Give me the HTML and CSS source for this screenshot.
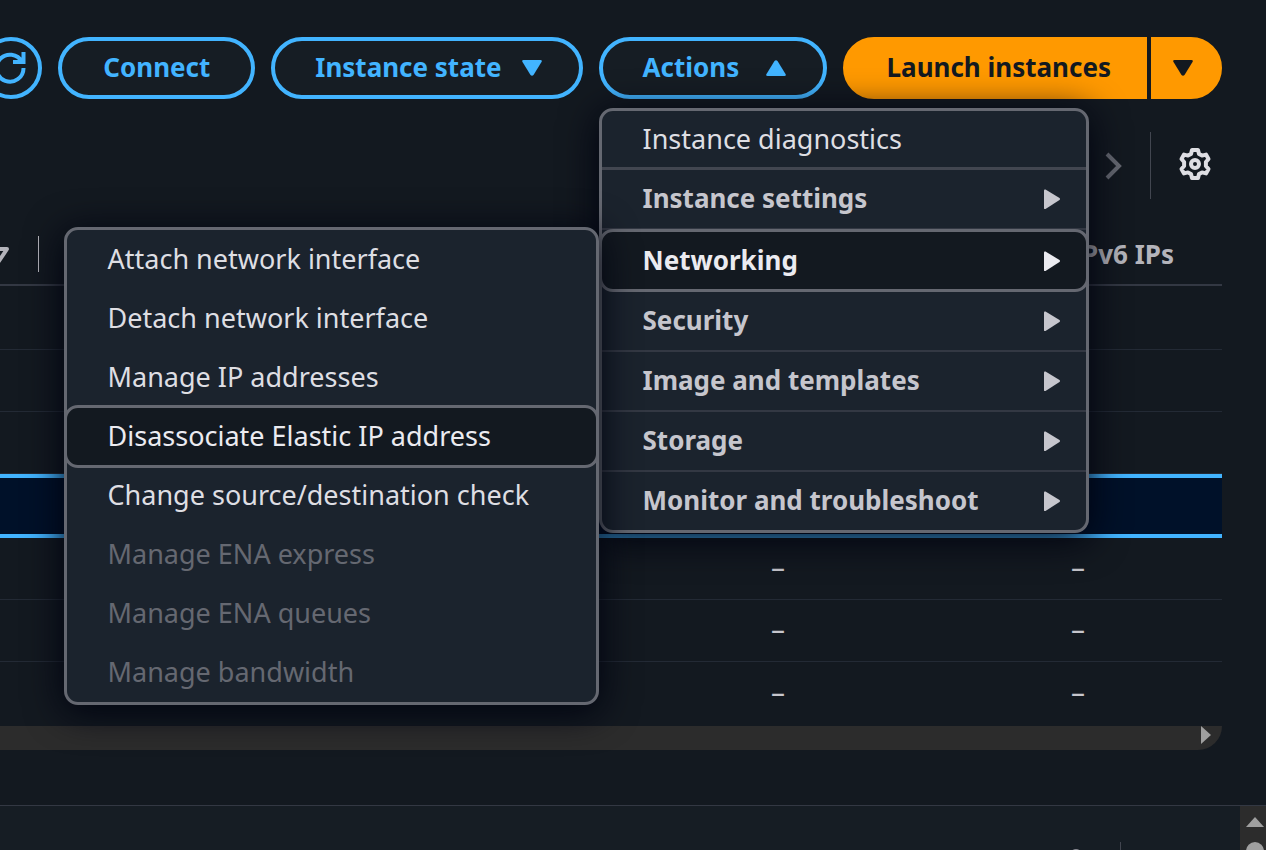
FILE: index.html
```html
<!DOCTYPE html>
<html lang="en">
<head>
    <meta charset="UTF-8">
    <title>Instances</title>
    <link rel="stylesheet" href="styles.css">
</head>
<body>
<svg class="sprite">
    <symbol id="down" viewBox="0 0 20 16"><path d="M1.500 0h17q2 0 1 2L11.500 15q-1.500 1.500-3 0L.5 2Q-.5 0 1.500 0z"/></symbol>
    <symbol id="up" viewBox="0 0 20 16"><path d="M1.500 16h17q2 0 1-2L11.500 1q-1.500-1.500-3 0L.5 14q-1 2 1 2z"/></symbol>
    <symbol id="right" viewBox="0 0 16 20"><path d="M0 1.500q0-1.500 1.500-1L15.500 9q1 1 0 2L1.500 20q-1.500.7-1.500-1z"/></symbol>
</svg>

<div class="toolbar">
    <button class="btn refresh" aria-label="Refresh">
        <svg viewBox="0 0 32 32"><path d="M28.500 0v10H18M27 10A13.500 13.500 0 1 0 28.500 16"/></svg>
    </button>
    <button class="btn">Connect</button>
    <button class="btn with-caret">Instance state <svg class="caret"><use href="#down"/></svg></button>
    <div class="dropdown">
        <button class="btn with-caret">Actions <svg class="caret"><use href="#up"/></svg></button>
        <ul class="menu actions">
            <li><button>Instance diagnostics</button></li>
            <li class="group"><button>Instance settings <svg><use href="#right"/></svg></button></li>
            <li class="group open">
                <button class="active">Networking <svg><use href="#right"/></svg></button>
                <ul class="menu submenu">
                    <li><button>Attach network interface</button></li>
                    <li><button>Detach network interface</button></li>
                    <li><button>Manage IP addresses</button></li>
                    <li><button class="active">Disassociate Elastic IP address</button></li>
                    <li><button>Change source/destination check</button></li>
                    <li><button disabled>Manage ENA express</button></li>
                    <li><button disabled>Manage ENA queues</button></li>
                    <li><button disabled>Manage bandwidth</button></li>
                </ul>
            </li>
            <li class="group"><button>Security <svg><use href="#right"/></svg></button></li>
            <li class="group"><button>Image and templates <svg><use href="#right"/></svg></button></li>
            <li class="group"><button>Storage <svg><use href="#right"/></svg></button></li>
            <li class="group"><button>Monitor and troubleshoot <svg><use href="#right"/></svg></button></li>
        </ul>
    </div>
    <div class="split">
        <button class="btn primary">Launch instances</button>
        <button class="btn primary more" aria-label="More launch options"><svg class="caret"><use href="#down"/></svg></button>
    </div>
</div>

<div class="paging">
    <button class="next" aria-label="Next page"><svg viewBox="0 0 18 28"><path d="M3 2l12 12L3 26"/></svg></button>
    <button class="settings" aria-label="Preferences">
        <svg viewBox="0 0 32 34">
            <path d="M13 3h6l1 4 3 1.600 4-1 2.500 4.400-2.600 3v4l2.600 3-2.500 4.400-4-1-3 1.600-1 4h-6l-1-4-3-1.600-4 1-2.500-4.400 2.600-3v-4l-2.600-3 2.500-4.400 4 1 3-1.600z"/>
            <circle cx="16" cy="17" r="4"/>
        </svg>
    </button>
</div>

<div class="table-wrap">
    <table>
        <colgroup><col class="c-first"><col><col class="c-ip"><col class="c-ipv6"></colgroup>
        <thead>
        <tr>
            <th class="sorted"><span><svg viewBox="0 0 10 14"><path d="M-10 2H7L-1 14z"/></svg></span></th>
            <th></th>
            <th></th>
            <th>IPv6 IPs</th>
        </tr>
        </thead>
        <tbody>
        <tr class="first"><td></td><td></td><td></td><td></td></tr>
        <tr><td></td><td></td><td></td><td></td></tr>
        <tr><td></td><td></td><td></td><td></td></tr>
        <tr class="selected"><td></td><td></td><td></td><td></td></tr>
        <tr><td></td><td></td><td>–</td><td>–</td></tr>
        <tr><td></td><td></td><td>–</td><td>–</td></tr>
        <tr class="last"><td></td><td></td><td>–</td><td>–</td></tr>
        </tbody>
    </table>
    <div class="scroll-x"><svg viewBox="0 0 10 18"><path d="M0 0l10 9-10 9z"/></svg></div>
</div>

<div class="panel">
    <div class="panel-tools">
        <span class="dot"></span>
        <span class="line"></span>
    </div>
    <div class="scroll-y">
        <svg viewBox="0 0 18 10"><path d="M0 10L9 0l9 10z"/></svg>
        <span class="thumb"></span>
    </div>
</div>
</body>
</html>
```

FILE: styles.css
```css
* {
    margin: 0;
    padding: 0;
    box-sizing: border-box;
    list-style: none;
}

body {
    display: flex;
    flex-direction: column;
    min-height: 100vh;
    overflow: hidden;
    background: #131920;
    color: #c6c6cd;
    font-family: "Noto Sans", "Open Sans", sans-serif;
    font-size: 26px;
}

button {
    border: 0;
    background: none;
    color: inherit;
    font: inherit;
    white-space: nowrap;
}

svg {
    display: block;
    flex: none;
    fill: currentColor;
}

.sprite {
    display: none;
}

/* toolbar */
.toolbar {
    display: flex;
    justify-content: flex-end;
    gap: 16px;
    padding: 37px 44px 0 0;
}

.btn {
    display: flex;
    flex: none;
    align-items: center;
    justify-content: center;
    height: 62px;
    padding: 0 41px 2px;
    border: 4px solid #42b4ff;
    border-radius: 31px;
    background: #161d24;
    color: #42b4ff;
    font-weight: 700;
}

.with-caret {
    gap: 20px;
    padding: 0 37px 2px 40px;
}

.caret {
    width: 20px;
    height: 16px;
    margin-top: 2px;
}

.refresh {
    width: 62px;
    padding: 0;
}

.refresh svg {
    width: 32px;
    height: 32px;
    overflow: visible;
    fill: none;
    stroke: currentColor;
    stroke-width: 4;
}

.split {
    display: flex;
    gap: 4px;
}

.primary {
    padding: 0 32px 2px 40px;
    border-color: #ff9900;
    border-radius: 31px 0 0 31px;
    background: #ff9900;
    color: #131920;
}

.more {
    width: 71px;
    padding: 0 8px 2px 0;
    border-radius: 0 31px 31px 0;
}

/* menus */
.dropdown {
    position: relative;
}

.dropdown > .btn {
    justify-content: space-between;
    min-width: 228px;
}

.menu {
    position: absolute;
    z-index: 2;
    border: 3px solid #656871;
    border-radius: 14px;
    background: #1b232d;
    box-shadow: 0 6px 36px 2px #000410;
    color: #dedee3;
    font-size: 27px;
    font-weight: 400;
}

.menu button {
    display: flex;
    align-items: center;
    justify-content: space-between;
    width: 100%;
    height: 59px;
    padding: 0 26px 2px 41px;
}

.menu .active {
    position: relative;
    height: 63px;
    margin: -2px -3px;
    padding: 0 26px 2px 41px;
    border: 3px solid #656871;
    border-radius: 14px;
    background: #131920;
    color: #ebebf0;
}

.menu button:disabled {
    color: #656871;
}

.menu svg {
    width: 16px;
    height: 20px;
    margin-top: 2px;
}

.actions {
    top: 71px;
    left: 0;
    width: 490px;
}

.actions > li {
    border-bottom: 2px solid #333843;
}

.actions > li:first-child {
    border-bottom: 3px solid #424650;
}

.actions > li:last-child {
    border-bottom: 0;
}

.actions > li > button {
    height: 58px;
}

.actions > li:first-child > button {
    height: 56px;
}

.actions > .group {
    color: #c6c6cd;
}

.group > button {
    font-size: 26px;
    font-weight: 700;
}

.actions > .open {
    position: relative;
    border: 0;
}

.menu .active {
    width: calc(100% + 6px);
}

.actions > .open > .active {
    height: 63px;
    margin: -1px -3px 0;
}

.submenu {
    top: -2px;
    right: calc(100% + 3px);
    width: 535px;
}

/* paging */
.paging {
    display: flex;
    justify-content: flex-end;
    height: 67px;
    margin-top: 33px;
    padding-right: 44px;
}

.next {
    padding-right: 28px;
    color: #656871;
}

.next svg {
    width: 18px;
    height: 28px;
    fill: none;
    stroke: currentColor;
    stroke-width: 4;
}

.settings {
    padding: 0 11px 4px 28px;
    border-left: 1px solid #424650;
    color: #dedee3;
}

.settings svg {
    width: 32px;
    height: 34px;
    fill: none;
    stroke: currentColor;
    stroke-width: 4;
    stroke-linejoin: round;
}

/* table */
.table-wrap {
    margin: 24px 44px 0 0;
}

table {
    width: 100%;
    table-layout: fixed;
    border-collapse: separate;
    border-spacing: 0;
}

.c-first {
    width: 39px;
}

.c-ip {
    width: 300px;
}

.c-ipv6 {
    width: 166px;
}

th,
td {
    height: 62px;
    padding: 0 15px 6px;
    border-bottom: 1px solid #232a35;
    line-height: 36px;
    text-align: left;
    white-space: nowrap;
}

th {
    height: 63px;
    padding: 0 16px;
    border-bottom: 2px solid #333843;
    color: #b4b4bb;
}

.sorted {
    padding: 0;
}

.sorted span {
    display: flex;
    align-items: center;
    height: 36px;
    border-right: 1px solid #b4b4bb;
}

.sorted svg {
    width: 10px;
    height: 14px;
    overflow: visible;
    fill: none;
    stroke: currentColor;
    stroke-width: 4;
    stroke-linejoin: round;
}

.first td,
.selected td {
    height: 64px;
}

.selected td {
    border-top: 4px solid #42b4ff;
    border-bottom: 4px solid #42b4ff;
    background: #001129;
}

.last td {
    height: 64px;
    border-bottom: 0;
}

td {
    font-size: 28px;
}

.scroll-x {
    display: flex;
    justify-content: flex-end;
    height: 24px;
    padding: 0 11px 0 0;
    border-radius: 0 0 28px 0;
    background: #2c2c2c;
    color: #9f9f9f;
}

.scroll-x svg {
    width: 10px;
    height: 18px;
}

/* split panel */
.panel {
    display: flex;
    flex: 1 0 0;
    justify-content: flex-end;
    min-height: 45px;
    margin-top: 55px;
    border-top: 1px solid #333843;
    background: #161d24;
}

.panel-tools {
    display: flex;
    gap: 38px;
    height: 44px;
    padding: 36px 119px 0 0;
    overflow: hidden;
}

.dot {
    width: 12px;
    height: 12px;
    margin-top: 7px;
    border: 2px solid #8c8c94;
    border-radius: 50%;
}

.line {
    width: 1px;
    height: 30px;
    background: #424650;
}

.scroll-y {
    display: flex;
    flex-direction: column;
    align-items: center;
    gap: 15px;
    width: 26px;
    height: 44px;
    padding: 11px 0 0 4px;
    overflow: hidden;
    background: #2c2c2c;
    color: #9f9f9f;
}

.scroll-y svg {
    width: 18px;
    height: 10px;
}

.thumb {
    flex: none;
    width: 18px;
    height: 40px;
    border-radius: 9px;
    background: #9f9f9f;
}
```
